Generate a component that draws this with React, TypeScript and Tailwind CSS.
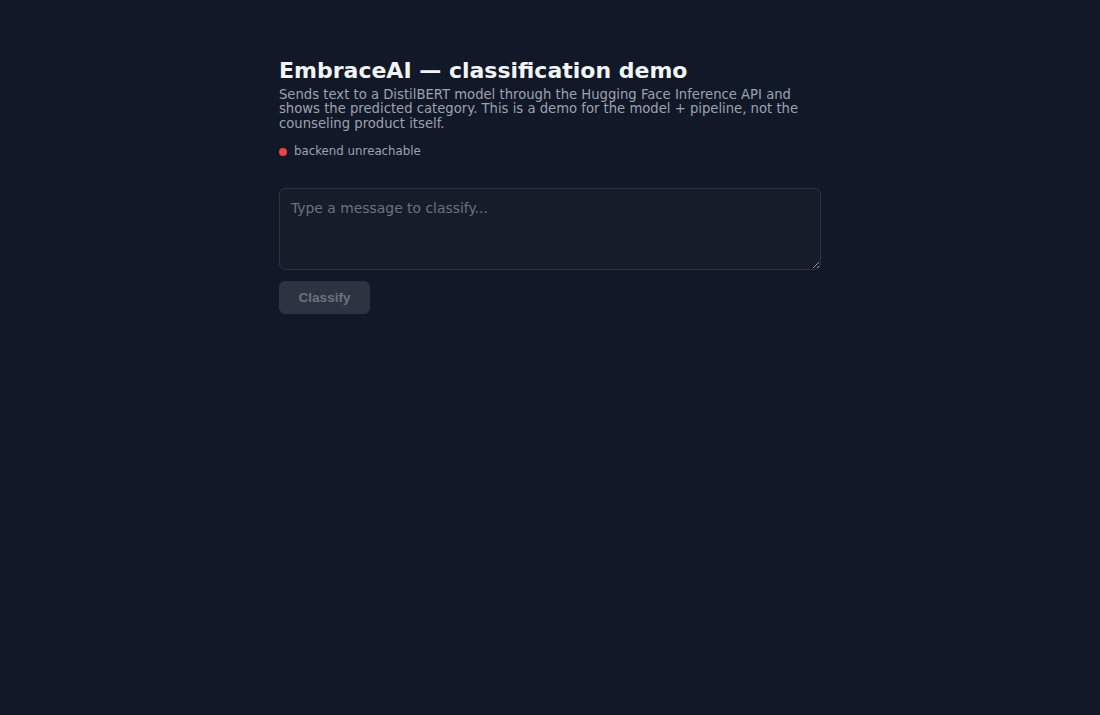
import React from "react";

export default function App() {
  return (
    <div className="min-h-screen w-full bg-[#111827] text-[#e5e7eb]" style={{ fontFamily: '"DejaVu Sans", sans-serif' }}>
      <div className="mx-auto w-[542px] pt-[56px]">
        <h1 className="text-[22px] font-bold leading-[30px] text-[#f3f4f6]">EmbraceAI — classification demo</h1>
        <p className="mt-[1.5px] text-[13.2px] leading-[14.5px] text-[#9ca3af]">
          Sends text to a DistilBERT model through the Hugging Face Inference API and shows the predicted category. This is a demo for the model + pipeline, not the counseling product itself.
        </p>
        <div className="mt-[11px] flex h-[18px] items-center gap-[7px] text-[11.8px] leading-[18px] text-[#9ca3af]">
          <span className="mt-[1px] inline-block h-[8px] w-[8px] rounded-full bg-[#ef4444]"></span>
          <span>backend unreachable</span>
        </div>
        <textarea
          placeholder="Type a message to classify..."
          className="mt-[28px] block h-[82px] w-full rounded-[6px] border border-[#2a3342] bg-[#161d29] px-[11px] py-[9px] text-[13.9px] text-[#e5e7eb] placeholder:text-[#6b7280] outline-none"
          style={{ fontFamily: '"DejaVu Sans", sans-serif' }}
        />
        <button
          disabled
          className="mt-[11px] block h-[33px] w-[91px] rounded-[6px] bg-[#2b3440] pt-[1px] text-[13.5px] font-bold text-[#6b7280]"
          style={{ fontFamily: '"Liberation Sans", Arial, sans-serif' }}
        >
          Classify
        </button>
      </div>
    </div>
  );
}
